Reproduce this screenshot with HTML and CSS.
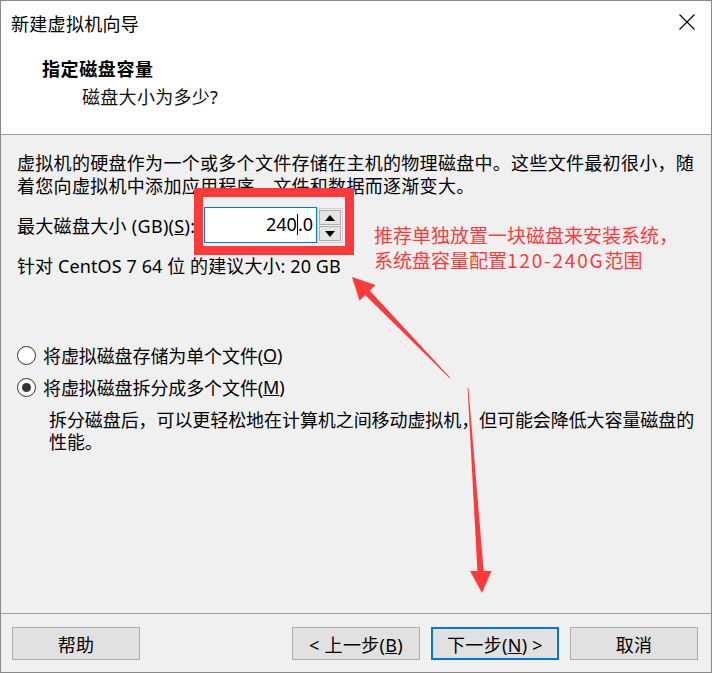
FILE: index.html
```html
<!DOCTYPE html>
<html lang="zh-CN">
<head>
<meta charset="utf-8">
<title>新建虚拟机向导</title>
<link rel="stylesheet" href="styles.css">
</head>
<body>
<div class="window">
  <header class="header">
    <div class="titlebar">
      <span class="title">新建虚拟机向导</span>
      <svg class="close" width="16" height="16" viewBox="0 0 16 16"><path d="M0.5 0.5 L15.5 15.5 M15.5 0.5 L0.5 15.5" stroke="#000" stroke-width="1.1" fill="none"/></svg>
    </div>
    <div class="h-title">指定磁盘容量</div>
    <div class="h-sub">磁盘大小为多少?</div>
  </header>
  <main class="content">
    <p class="intro">虚拟机的硬盘作为一个或多个文件存储在主机的物理磁盘中。这些文件最初很小，随<br>着您向虚拟机中添加应用程序、文件和数据而逐渐变大。</p>
    <div class="size-row">
      <label class="size-label">最大磁盘大小 (GB)(<u>S</u>):</label>
      <div class="spin">
        <div class="spin-input">240<span class="caret"></span>.0</div>
        <div class="spin-btns">
          <div class="spin-btn"><svg width="10" height="6" viewBox="0 0 10 6"><polygon points="5,0 10,6 0,6" fill="#000"/></svg></div>
          <div class="spin-btn"><svg width="10" height="6" viewBox="0 0 10 6"><polygon points="0,0 10,0 5,6" fill="#000"/></svg></div>
        </div>
      </div>
    </div>
    <div class="recommend">针对 CentOS 7 64 位 的建议大小: 20 GB</div>
    <div class="options">
      <div class="radio-row"><span class="radio"></span>将虚拟磁盘存储为单个文件(<u>O</u>)</div>
      <div class="radio-row"><span class="radio checked"></span>将虚拟磁盘拆分成多个文件(<u>M</u>)</div>
      <p class="desc">拆分磁盘后，可以更轻松地在计算机之间移动虚拟机，但可能会降低大容量磁盘的<br>性能。</p>
    </div>
  </main>
  <footer class="footer">
    <button class="btn">帮助</button>
    <span class="spacer"></span>
    <button class="btn">&lt; 上一步(<u>B</u>)</button>
    <button class="btn default">下一步(<u>N</u>) &gt;</button>
    <button class="btn">取消</button>
  </footer>
</div>

<div class="annot-box"></div>
<div class="annot-text">推荐单独放置一块磁盘来安装系统，<br>系统盘容量配置<span class="annot-num">120-240G</span>范围</div>
<svg class="annot-arrows" width="712" height="673" viewBox="0 0 712 673">
  <polygon points="450.3,377.7 368.2,289.1 363.6,293.5 449.7,378.3" fill="#fc3a3a"/>
  <polygon points="352,277 375.5,285.0 359.5,300.8" fill="#fc3a3a"/>
  <polygon points="467.6,388 468.4,388 484,575 477.6,575" fill="#fc3a3a"/>
  <polygon points="482,593 470,571 491.5,571" fill="#fc3a3a"/>
</svg>
</body>
</html>
```
FILE: styles.css
```css
body {
  margin: 0;
  width: 712px;
  height: 673px;
  overflow: hidden;
  position: relative;
  background: #f0f0f0;
  font-family: "Noto Sans", "Noto Sans CJK SC", sans-serif;
  color: #000;
}

.window {
  box-sizing: border-box;
  height: 673px;
  border: 1px solid #888;
  display: flex;
  flex-direction: column;
  background: #f0f0f0;
}

.header {
  flex: none;
  height: 133px;
  background: #fff;
  border-bottom: 1px solid #a0a0a0;
}

.titlebar {
  height: 44px;
  display: flex;
  align-items: center;
  justify-content: space-between;
  padding: 0 16px 0 10px;
}

.title {
  font-family: "Noto Sans CJK SC", sans-serif;
  font-size: 18px;
  letter-spacing: 0.3px;
  line-height: 44px;
}

.close {
  display: block;
  margin-top: -2px;
}

.h-title {
  margin: 9px 0 0 41px;
  font-family: "Noto Sans CJK SC", sans-serif;
  font-size: 18px;
  font-weight: 700;
  letter-spacing: 0.6px;
  line-height: 28px;
}

.h-sub {
  margin-left: 81px;
  font-size: 18px;
  letter-spacing: 0.3px;
  line-height: 30px;
  color: #111;
}

.content {
  flex: 1;
  padding: 17px 0 0 16px;
  font-size: 18px;
}

.intro {
  margin: 0;
  line-height: 23px;
  letter-spacing: 0.3px;
  white-space: nowrap;
}

.size-row {
  display: flex;
  align-items: center;
  height: 36px;
  margin-top: 9px;
}

.size-label {
  width: 187px;
  letter-spacing: 0.3px;
  white-space: nowrap;
}

.spin {
  display: flex;
  align-items: flex-start;
}

.spin-input {
  box-sizing: border-box;
  width: 113px;
  height: 36px;
  border: 1px solid #0078d7;
  background: #fff;
  text-align: right;
  padding-right: 3px;
  line-height: 33px;
  font-size: 18px;
}

.caret {
  display: inline-block;
  width: 1px;
  height: 21px;
  background: #000;
  vertical-align: -4px;
}

.spin-btns {
  box-sizing: border-box;
  width: 26px;
  height: 35px;
  margin-top: 1px;
  display: flex;
  flex-direction: column;
  gap: 1px;
  padding: 1px;
  border: 1px solid #d0d0d0;
  background: #f0f0f0;
}

.spin-btn {
  flex: 1;
  display: flex;
  align-items: center;
  justify-content: center;
  border: 1px solid #adadad;
  background: #e5e5e5;
}

.spin-btn svg {
  display: block;
}

.recommend {
  margin-top: 12px;
  line-height: 22px;
  letter-spacing: 0.1px;
}

.options {
  margin-top: 62px;
}

.radio-row {
  display: flex;
  align-items: center;
  height: 32px;
  letter-spacing: -0.1px;
}

.radio {
  box-sizing: border-box;
  width: 19px;
  height: 19px;
  margin-right: 7px;
  border: 1px solid #333;
  border-radius: 50%;
  background: #fff;
  display: flex;
  align-items: center;
  justify-content: center;
}

.radio.checked::after {
  content: "";
  width: 9px;
  height: 9px;
  border-radius: 50%;
  background: #333;
}

.desc {
  margin: 6px 0 0 32px;
  line-height: 22px;
  letter-spacing: -0.08px;
  white-space: nowrap;
}

.footer {
  flex: none;
  box-sizing: border-box;
  height: 59px;
  border-top: 1px solid #a0a0a0;
  display: flex;
  align-items: flex-start;
  padding: 13px 13px 0 11px;
}

.spacer {
  flex: 1;
}

.btn {
  box-sizing: border-box;
  width: 128px;
  height: 33px;
  padding: 0;
  border: 1px solid #adadad;
  background: #e1e1e1;
  font-family: "Noto Sans", "Noto Sans CJK SC", sans-serif;
  font-size: 18px;
  color: #000;
  letter-spacing: 0.3px;
}

.btn + .btn {
  margin-left: 11px;
}

.btn.default {
  border: 2px solid #0078d7;
}

/* screenshot annotations */
.annot-box {
  position: absolute;
  left: 194px;
  top: 188px;
  width: 160px;
  height: 67px;
  box-sizing: border-box;
  border: 9px solid #fc3a3a;
}

.annot-text {
  position: absolute;
  left: 374px;
  top: 222px;
  font-family: "Noto Sans CJK SC", sans-serif;
  font-size: 19px;
  line-height: 25px;
  color: #fc3a3a;
  white-space: nowrap;
}

.annot-num {
  letter-spacing: 1.8px;
}

.annot-arrows {
  position: absolute;
  left: 0;
  top: 0;
  pointer-events: none;
}
```
